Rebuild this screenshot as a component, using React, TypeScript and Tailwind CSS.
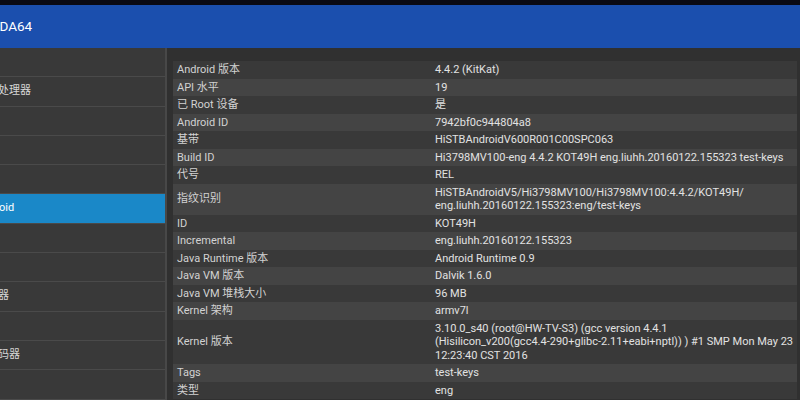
import React from 'react'

const menu = [
  { label: '系统' },
  { label: '中央处理器' },
  { label: '显示' },
  { label: '网络' },
  { label: '电池' },
  { label: 'Android', active: true },
  { label: '设备' },
  { label: '温度' },
  { label: '传感器' },
  { label: '程序' },
  { label: '编解码器' },
  { label: '目录' },
  { label: '系统文件' },
]

const rows: [string, string[]][] = [
  ['Android 版本', ['4.4.2 (KitKat)']],
  ['API 水平', ['19']],
  ['已 Root 设备', ['是']],
  ['Android ID', ['7942bf0c944804a8']],
  ['基带', ['HiSTBAndroidV600R001C00SPC063']],
  ['Build ID', ['Hi3798MV100-eng 4.4.2 KOT49H eng.liuhh.20160122.155323 test-keys']],
  ['代号', ['REL']],
  ['指纹识别', ['HiSTBAndroidV5/Hi3798MV100/Hi3798MV100:4.4.2/KOT49H/', 'eng.liuhh.20160122.155323:eng/test-keys']],
  ['ID', ['KOT49H']],
  ['Incremental', ['eng.liuhh.20160122.155323']],
  ['Java Runtime 版本', ['Android Runtime 0.9']],
  ['Java VM 版本', ['Dalvik 1.6.0']],
  ['Java VM 堆栈大小', ['96 MB']],
  ['Kernel 架构', ['armv7l']],
  ['Kernel 版本', [
    '3.10.0_s40 (root@HW-TV-S3) (gcc version 4.4.1',
    '(Hisilicon_v200(gcc4.4-290+glibc-2.11+eabi+nptl)) ) #1 SMP Mon May 23',
    '12:23:40 CST 2016',
  ]],
  ['Tags', ['test-keys']],
  ['类型', ['eng']],
]

export default function App() {
  return (
    <div className="w-[800px] h-[400px] overflow-hidden flex flex-col bg-[#303030] font-['Roboto','Noto_Sans_CJK_SC',sans-serif]">
      <div className="h-[5px] bg-[#0a0a14]" />

      {/* Title bar */}
      <header className="h-[43px] bg-[#1b4fae] flex items-center">
        <span className="-ml-[13px] text-[13.5px] text-white">AIDA64</span>
      </header>

      <div className="flex flex-1 min-h-0">
        {/* Sidebar */}
        <aside className="w-[167px] shrink-0 bg-[#393939] border-r-2 border-[#484848] overflow-hidden">
          {menu.map((m) => (
            <div
              key={m.label}
              className={`h-[29.3px] flex items-center border-b border-[#4a4a4a] whitespace-nowrap text-[11px] ${
                m.active ? 'bg-[#1a88c8] text-white' : 'text-[#d6d6d6]'
              }`}
            >
              <span className="-ml-[24px]">{m.label}</span>
            </div>
          ))}
        </aside>

        {/* Detail table */}
        <main className="flex-1 pl-[6px] pr-[3px] pt-[13px] overflow-hidden">
          {rows.map(([k, v], i) => (
            <div
              key={k}
              className={`flex items-center py-[2px] text-[11px] leading-[13.5px] ${
                i % 2 === 1 ? 'bg-[#444444]' : 'bg-[#393939]'
              }`}
            >
              <div className="w-[262px] shrink-0 pl-[4px] text-[#d2d2d2]">{k}</div>
              <div className="flex-1 text-[#e2e2e2] whitespace-nowrap">
                {v.map((line) => (
                  <div key={line}>{line}</div>
                ))}
              </div>
            </div>
          ))}
        </main>
      </div>
    </div>
  )
}
